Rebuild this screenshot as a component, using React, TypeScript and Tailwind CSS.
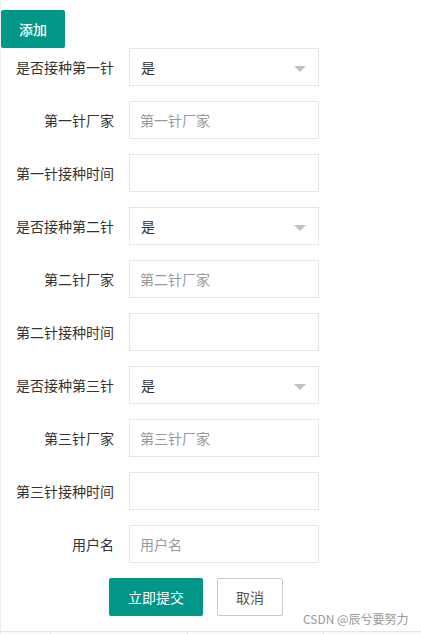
import { useState } from 'react';

type Field =
  | { kind: 'select'; label: string; value: string }
  | { kind: 'input'; label: string; placeholder: string };

const FIELDS: Field[] = [
  { kind: 'select', label: '是否接种第一针', value: '是' },
  { kind: 'input', label: '第一针厂家', placeholder: '第一针厂家' },
  { kind: 'input', label: '第一针接种时间', placeholder: '' },
  { kind: 'select', label: '是否接种第二针', value: '是' },
  { kind: 'input', label: '第二针厂家', placeholder: '第二针厂家' },
  { kind: 'input', label: '第二针接种时间', placeholder: '' },
  { kind: 'select', label: '是否接种第三针', value: '是' },
  { kind: 'input', label: '第三针厂家', placeholder: '第三针厂家' },
  { kind: 'input', label: '第三针接种时间', placeholder: '' },
  { kind: 'input', label: '用户名', placeholder: '用户名' },
];

const FormRow = ({ field }: { field: Field }) => {
  const [text, setText] = useState('');
  return (
    <div className="flex items-center h-[38px] mb-[15px]">
      <label className="w-[128px] pr-[15px] text-right text-[14px] text-[#333] leading-[38px] whitespace-nowrap">
        {field.label}
      </label>
      {field.kind === 'select' ? (
        <div className="relative w-[190px] h-[38px] border border-[#e6e6e6] bg-white flex items-center pl-[11px] text-[14px] text-[#333]">
          {field.value}
          <span className="absolute right-[12px] top-[17px] w-0 h-0 border-l-[6px] border-r-[6px] border-t-[6px] border-l-transparent border-r-transparent border-t-[#c2c2c2]" />
        </div>
      ) : (
        <input
          value={text}
          onChange={(e) => setText(e.target.value)}
          placeholder={field.placeholder}
          className="w-[190px] h-[38px] border border-[#e6e6e6] bg-white px-[10px] text-[14px] text-[#333] placeholder:text-[#999] outline-none"
        />
      )}
    </div>
  );
};

export default function App() {
  return (
    <div
      className="relative w-[421px] h-[634px] overflow-hidden bg-white border-l border-[#eeeeee]"
      style={{ fontFamily: '"Noto Sans CJK SC", "Noto Sans", sans-serif' }}
    >
      <div className="pt-[10px]">
        <button className="h-[38px] px-[18px] bg-[#009688] text-white text-[14px] font-medium rounded-[2px]">添加</button>
      </div>

      <div>
        {FIELDS.map((f) => (
          <FormRow key={f.label} field={f} />
        ))}
      </div>

      <div className="flex gap-[14px] pl-[108px]">
        <button className="h-[38px] w-[94px] bg-[#009688] text-white text-[14px] rounded-[2px]">立即提交</button>
        <button className="h-[38px] w-[66px] bg-white border border-[#c9c9c9] text-[#555] text-[14px] rounded-[2px]">
          取消
        </button>
      </div>

      {/* table header below the fold */}
      <div className="mt-[15px] grid grid-cols-[49px_137px_136px_1fr] h-[10px] border-t border-[#e6e6e6] bg-[#fafafa]">
        <div />
        <div className="border-l border-[#e6e6e6]" />
        <div className="border-l border-[#e6e6e6]" />
        <div className="border-l border-[#e6e6e6]" />
      </div>

      <span className="absolute left-[302px] top-[610px] text-[12px] text-[#999]">CSDN @辰兮要努力</span>
    </div>
  );
}
